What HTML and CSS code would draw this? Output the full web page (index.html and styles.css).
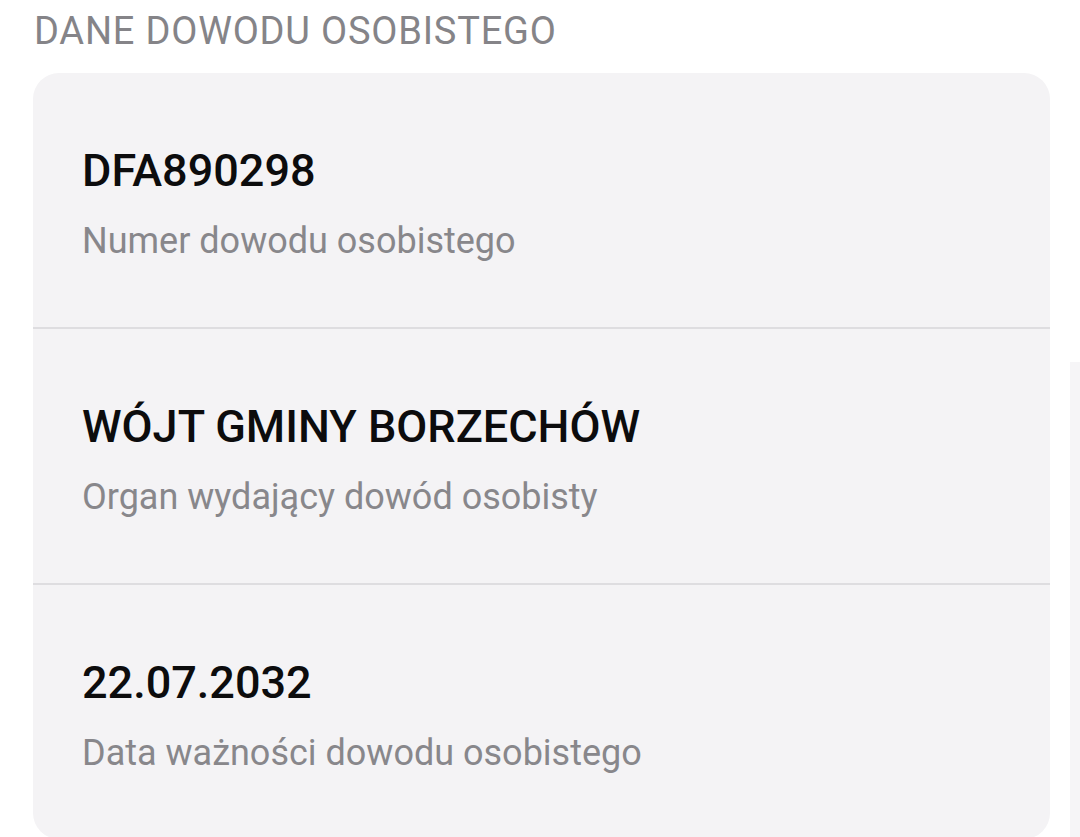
FILE: index.html
```html
<!DOCTYPE html>
<html lang="pl">
<head>
<meta charset="utf-8">
<title>Dane dowodu osobistego</title>
<link rel="stylesheet" href="styles.css">
</head>
<body>
<main class="page">
  <h2 class="section-title">DANE DOWODU OSOBISTEGO</h2>
  <section class="card">
    <div class="row">
      <div class="value">DFA890298</div>
      <div class="label">Numer dowodu osobistego</div>
    </div>
    <div class="row">
      <div class="value">WÓJT GMINY BORZECHÓW</div>
      <div class="label">Organ wydający dowód osobisty</div>
    </div>
    <div class="row">
      <div class="value">22.07.2032</div>
      <div class="label">Data ważności dowodu osobistego</div>
    </div>
  </section>
  <div class="scroll-track"></div>
</main>
</body>
</html>
```

FILE: styles.css
```css
html, body {
  margin: 0;
  padding: 0;
  background: #ffffff;
  font-family: Roboto, "Noto Sans", "Liberation Sans", sans-serif;
  overflow: hidden;
}

.page {
  position: relative;
  width: 1080px;
  height: 837px;
  padding: 9px 30px 0 33px;
  box-sizing: border-box;
  display: flex;
  flex-direction: column;
  gap: 20px;
}

.section-title {
  margin: 0;
  padding-left: 1px;
  font-size: 38px;
  line-height: 44px;
  font-weight: 400;
  color: #858488;
  letter-spacing: 0.8px;
}

.card {
  background: #f4f3f5;
  border-radius: 26px;
  display: flex;
  flex-direction: column;
  flex: 0 0 auto;
}

.row {
  height: 256px;
  box-sizing: border-box;
  padding: 73px 30px 0 49px;
  display: flex;
  flex-direction: column;
  gap: 23px;
}

.row:first-child {
  height: 254px;
}

.row + .row {
  border-top: 2px solid #dedde0;
}

.value {
  font-size: 45px;
  line-height: 50px;
  font-weight: 500;
  color: #0c0c0d;
}

.label {
  font-size: 36px;
  line-height: 44px;
  font-weight: 400;
  color: #88878b;
}

.scroll-track {
  position: absolute;
  right: 0;
  top: 362px;
  width: 10px;
  height: 475px;
  background: #f6f5f7;
}
```
